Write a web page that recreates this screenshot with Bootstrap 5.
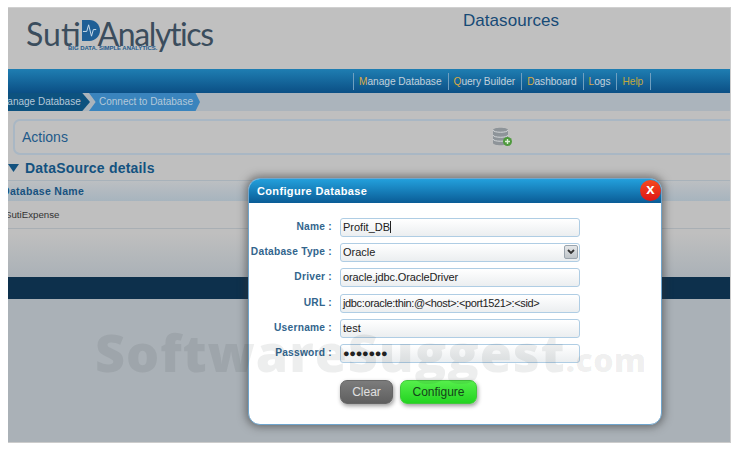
<!DOCTYPE html>
<html lang="en">
<head>
<meta charset="utf-8">
<title>Datasources</title>
<link rel="stylesheet" href="https://cdn.jsdelivr.net/npm/bootstrap@5.3.0/dist/css/bootstrap.min.css">
<style>
html,body{background:#fff;margin:0;height:450px;overflow:hidden}
body{font-family:"Liberation Sans",Arial,sans-serif}
.app-frame{position:relative;width:723px;height:436px;margin:7px 0 0 8px;background:#aab1b7;overflow:hidden;border-top:1px solid #d0d0d0;border-right:1px solid #ccc;border-bottom:1px solid #ccc}
.top-head{height:61px;background:#c0c0c0}
.logo-box{padding:9px 0 0 18px;color:#3b4d5d;font-family:Lato,sans-serif;font-size:32px;line-height:34px}
.logo-word{letter-spacing:-1.4px}
.logo-mark{width:18px;height:21px;margin:0 -2px 7px 1px;flex:none}
.logo-tag{position:absolute;left:60px;top:37px;font-size:6px;line-height:6px;font-weight:700;color:#1f5a8c;letter-spacing:-.05px;white-space:nowrap}
.page-name{position:absolute;left:455px;top:3px;font-size:17px;line-height:20px;color:#174a76;letter-spacing:.05px}
.main-bar{height:24px;background:linear-gradient(#1f7eb2,#0b4f85);padding-left:345px}
.main-bar a{font-size:10.2px;line-height:17px;color:#c2d1dc;text-decoration:none;border-left:1px solid #6f9fc0;padding:0 6px 0 5px;height:17px;display:block;letter-spacing:-.05px;white-space:nowrap}
.main-bar a:last-child{border-right:1px solid #6f9fc0;padding-right:7px}
.main-bar i{font-style:normal;color:#d9ab45}
.main-bar .hlp{color:#c2a83e}
.trail-row{height:18px;background:#abb4bc;overflow:hidden}
.trail-a,.trail-b{font-size:10px;line-height:18px;color:#b5c9d9;white-space:nowrap;flex:none}
.trail-a{margin-left:-14px;width:96px;padding-left:5px;background:#0d527f;clip-path:polygon(0 0,92% 0,100% 50%,92% 100%,0 100%)}
.trail-b{width:111px;padding-left:10px;background:#3a84bd;clip-path:polygon(0 0,96% 0,100% 50%,96% 100%,0 100%,6% 50%);margin-left:-1px}
.lower-part{height:166px;background:linear-gradient(#bfbfbf 0,#bfbfbf 122px,#aab1b7 166px);padding-top:8px}
.action-box{height:36px;margin:0 -8px 0 5px;border:2px solid #a9b7c4;border-radius:7px;background:#c0c0c0;font-size:14px;color:#1e5a8a;padding-left:7px;line-height:32px}
.db-icon{position:absolute;left:484px;top:119px;width:21px;height:20px}
.ds-title{font-size:14px;font-weight:700;color:#13527f;line-height:18px;margin:4px 0 0 0;letter-spacing:.2px}
.ds-title svg{width:11px;height:8px;margin-right:6px;vertical-align:1px}
.grid-head{height:21px;margin-top:3px;background:linear-gradient(#bcbfc2,#a7b4be);border-top:1px solid #a8b2ba;font-weight:700;font-size:10.5px;line-height:20px;color:#17527f;white-space:nowrap;overflow:hidden;text-indent:-6px;letter-spacing:.3px}
.grid-row{height:28px;border-bottom:1px solid #a9afb4;font-size:9.7px;line-height:27px;color:#333;text-indent:-3px;white-space:nowrap;overflow:hidden}
.dark-band{height:22px;background:#0d304c}
.dlg{position:absolute;left:240px;top:170px;width:414px;height:247px;background:#fff;border-radius:12px;border:1px solid #6fa5cd;box-shadow:0 0 9px 2px rgba(50,50,50,.55)}
.dlg-head{height:24px;background:linear-gradient(#23a0dc,#0a5c96);border-radius:11px 11px 0 0;color:#fff;font-size:11px;font-weight:700;line-height:25px;padding-left:8px;letter-spacing:.35px}
.dlg-x{position:absolute;right:0;top:1px;width:21px;height:21px;border-radius:50%;background:linear-gradient(#f54a1e,#dd1616);color:#fff;text-align:center;font-size:15px;font-weight:700;line-height:18px}
.dlg-body{padding:15px 0 0}
.fld-row{height:25.2px;align-items:flex-start}
.fld-label{width:83px;text-align:right;font-weight:700;font-size:10.2px;line-height:17px;color:#32658d;white-space:nowrap;letter-spacing:.25px}
.fld-box{width:240px;height:19px;margin-left:8px;border:1px solid #afcde4;border-radius:3px;background:linear-gradient(#fff,#ebeef0);font-size:11px;line-height:17px;color:#222;padding-left:2px;white-space:nowrap;overflow:hidden}
.fit-driver{letter-spacing:-.12px}
.fit-url{letter-spacing:-.36px}
.fit-pass{letter-spacing:-.3px}
.caret-bar{border-left:1px solid #222;display:inline-block;height:12px;vertical-align:-2px}
.pick-btn{width:14px;height:14px;margin:1px 1px 0 0;background:linear-gradient(#e4e6e8,#bfc5ca);border:1px solid #9aa4ad;border-radius:2px}
.act-row{margin:11px 0 0 91px;gap:7px}
.btn-clear,.btn-conf{height:24px;border-radius:7px;font-size:12px;line-height:22px;text-align:center;padding:0;box-shadow:1px 2px 4px rgba(0,0,0,.4)}
.btn-clear{width:53px;background:linear-gradient(#7c7c7c,#5f5f5f);border:1px solid #666;color:#e0e0e0}
.btn-conf{width:77px;background:linear-gradient(#55ef4b,#23d421);border:1px solid #40c93a;color:#14421a}
.mark-text{position:absolute;left:87px;top:316px;font-family:"Open Sans","DejaVu Sans",sans-serif;font-weight:800;font-size:52px;line-height:56px;color:rgba(20,25,30,.075);letter-spacing:1px;white-space:nowrap;pointer-events:none}
.mark-text span{font-size:32px;letter-spacing:.5px}
</style>
</head>
<body>
<div class="app-frame">
  <div class="top-head position-relative">
    <div class="logo-box d-flex align-items-center">Suti<svg class="logo-mark" viewBox="0 0 19 22"><path d="M0 0h8c6 0 11 5 11 11S14 22 8 22H0z" fill="#1f5f96"/><path d="M1 12h4l2-7 3 12 2-7h3" fill="none" stroke="#cfe0ee" stroke-width="1"/></svg><span class="logo-word">Analytics</span></div>
    <div class="logo-tag">BIG DATA. SIMPLE ANALYTICS.</div>
    <div class="page-name">Datasources</div>
  </div>
  <nav class="main-bar d-flex align-items-center">
    <a href="#"><i>M</i>anage Database</a><a href="#"><i>Q</i>uery Builder</a><a href="#"><i>D</i>ashboard</a><a href="#"><i>L</i>ogs</a><a href="#" class="hlp">Help</a>
  </nav>
  <div class="trail-row d-flex">
    <div class="trail-a">Manage Database</div>
    <div class="trail-b">Connect to Database</div>
  </div>
  <div class="lower-part">
    <div class="action-box">Actions</div>
    <div class="ds-title"><svg viewBox="0 0 11 8"><path d="M0 0h11L5.500 8z" fill="#13527f"/></svg>DataSource details</div>
    <div class="grid-head">Database Name</div>
    <div class="grid-row">SutiExpense</div>
  </div>
  <div class="dark-band"></div>
  <svg class="db-icon" viewBox="0 0 21 20"><path d="M1 3c0-3 15-3 15 0v13c0 3-15 3-15 0z" fill="#8e9499"/><path d="M1 3c0 3 15 3 15 0M1 8c0 3 15 3 15 0M1 12c0 3 15 3 15 0" fill="none" stroke="#d3d6d8" stroke-width="1"/><circle cx="15.500" cy="14.500" r="4.500" fill="#4f9a3e"/><path d="M13 14.500h5M15.500 12v5" stroke="#dcefd6" stroke-width="1.400"/></svg>
  <div class="dlg">
    <div class="dlg-head">Configure Database</div>
    <div class="dlg-x">x</div>
    <div class="dlg-body">
      <div class="d-flex fld-row"><div class="fld-label">Name :</div><div class="fld-box">Profit_DB<span class="caret-bar"></span></div></div>
      <div class="d-flex fld-row"><div class="fld-label">Database Type :</div><div class="fld-box d-flex justify-content-between">Oracle<div class="pick-btn d-flex align-items-center justify-content-center"><svg width="8" height="6" viewBox="0 0 8 6"><path d="M1 1l3 3 3-3" fill="none" stroke="#333" stroke-width="1.800"/></svg></div></div></div>
      <div class="d-flex fld-row"><div class="fld-label">Driver :</div><div class="fld-box fit-driver">oracle.jdbc.OracleDriver</div></div>
      <div class="d-flex fld-row"><div class="fld-label">URL :</div><div class="fld-box fit-url">jdbc:oracle:thin:@&lt;host&gt;:&lt;port1521&gt;:&lt;sid&gt;</div></div>
      <div class="d-flex fld-row"><div class="fld-label">Username :</div><div class="fld-box">test</div></div>
      <div class="d-flex fld-row"><div class="fld-label">Password :</div><div class="fld-box fit-pass">●●●●●●●</div></div>
      <div class="d-flex act-row">
        <button type="button" class="btn btn-clear">Clear</button>
        <button type="button" class="btn btn-conf">Configure</button>
      </div>
    </div>
  </div>
  <div class="mark-text">SoftwareSuggest<span>.com</span></div>
</div>
</body>
</html>
